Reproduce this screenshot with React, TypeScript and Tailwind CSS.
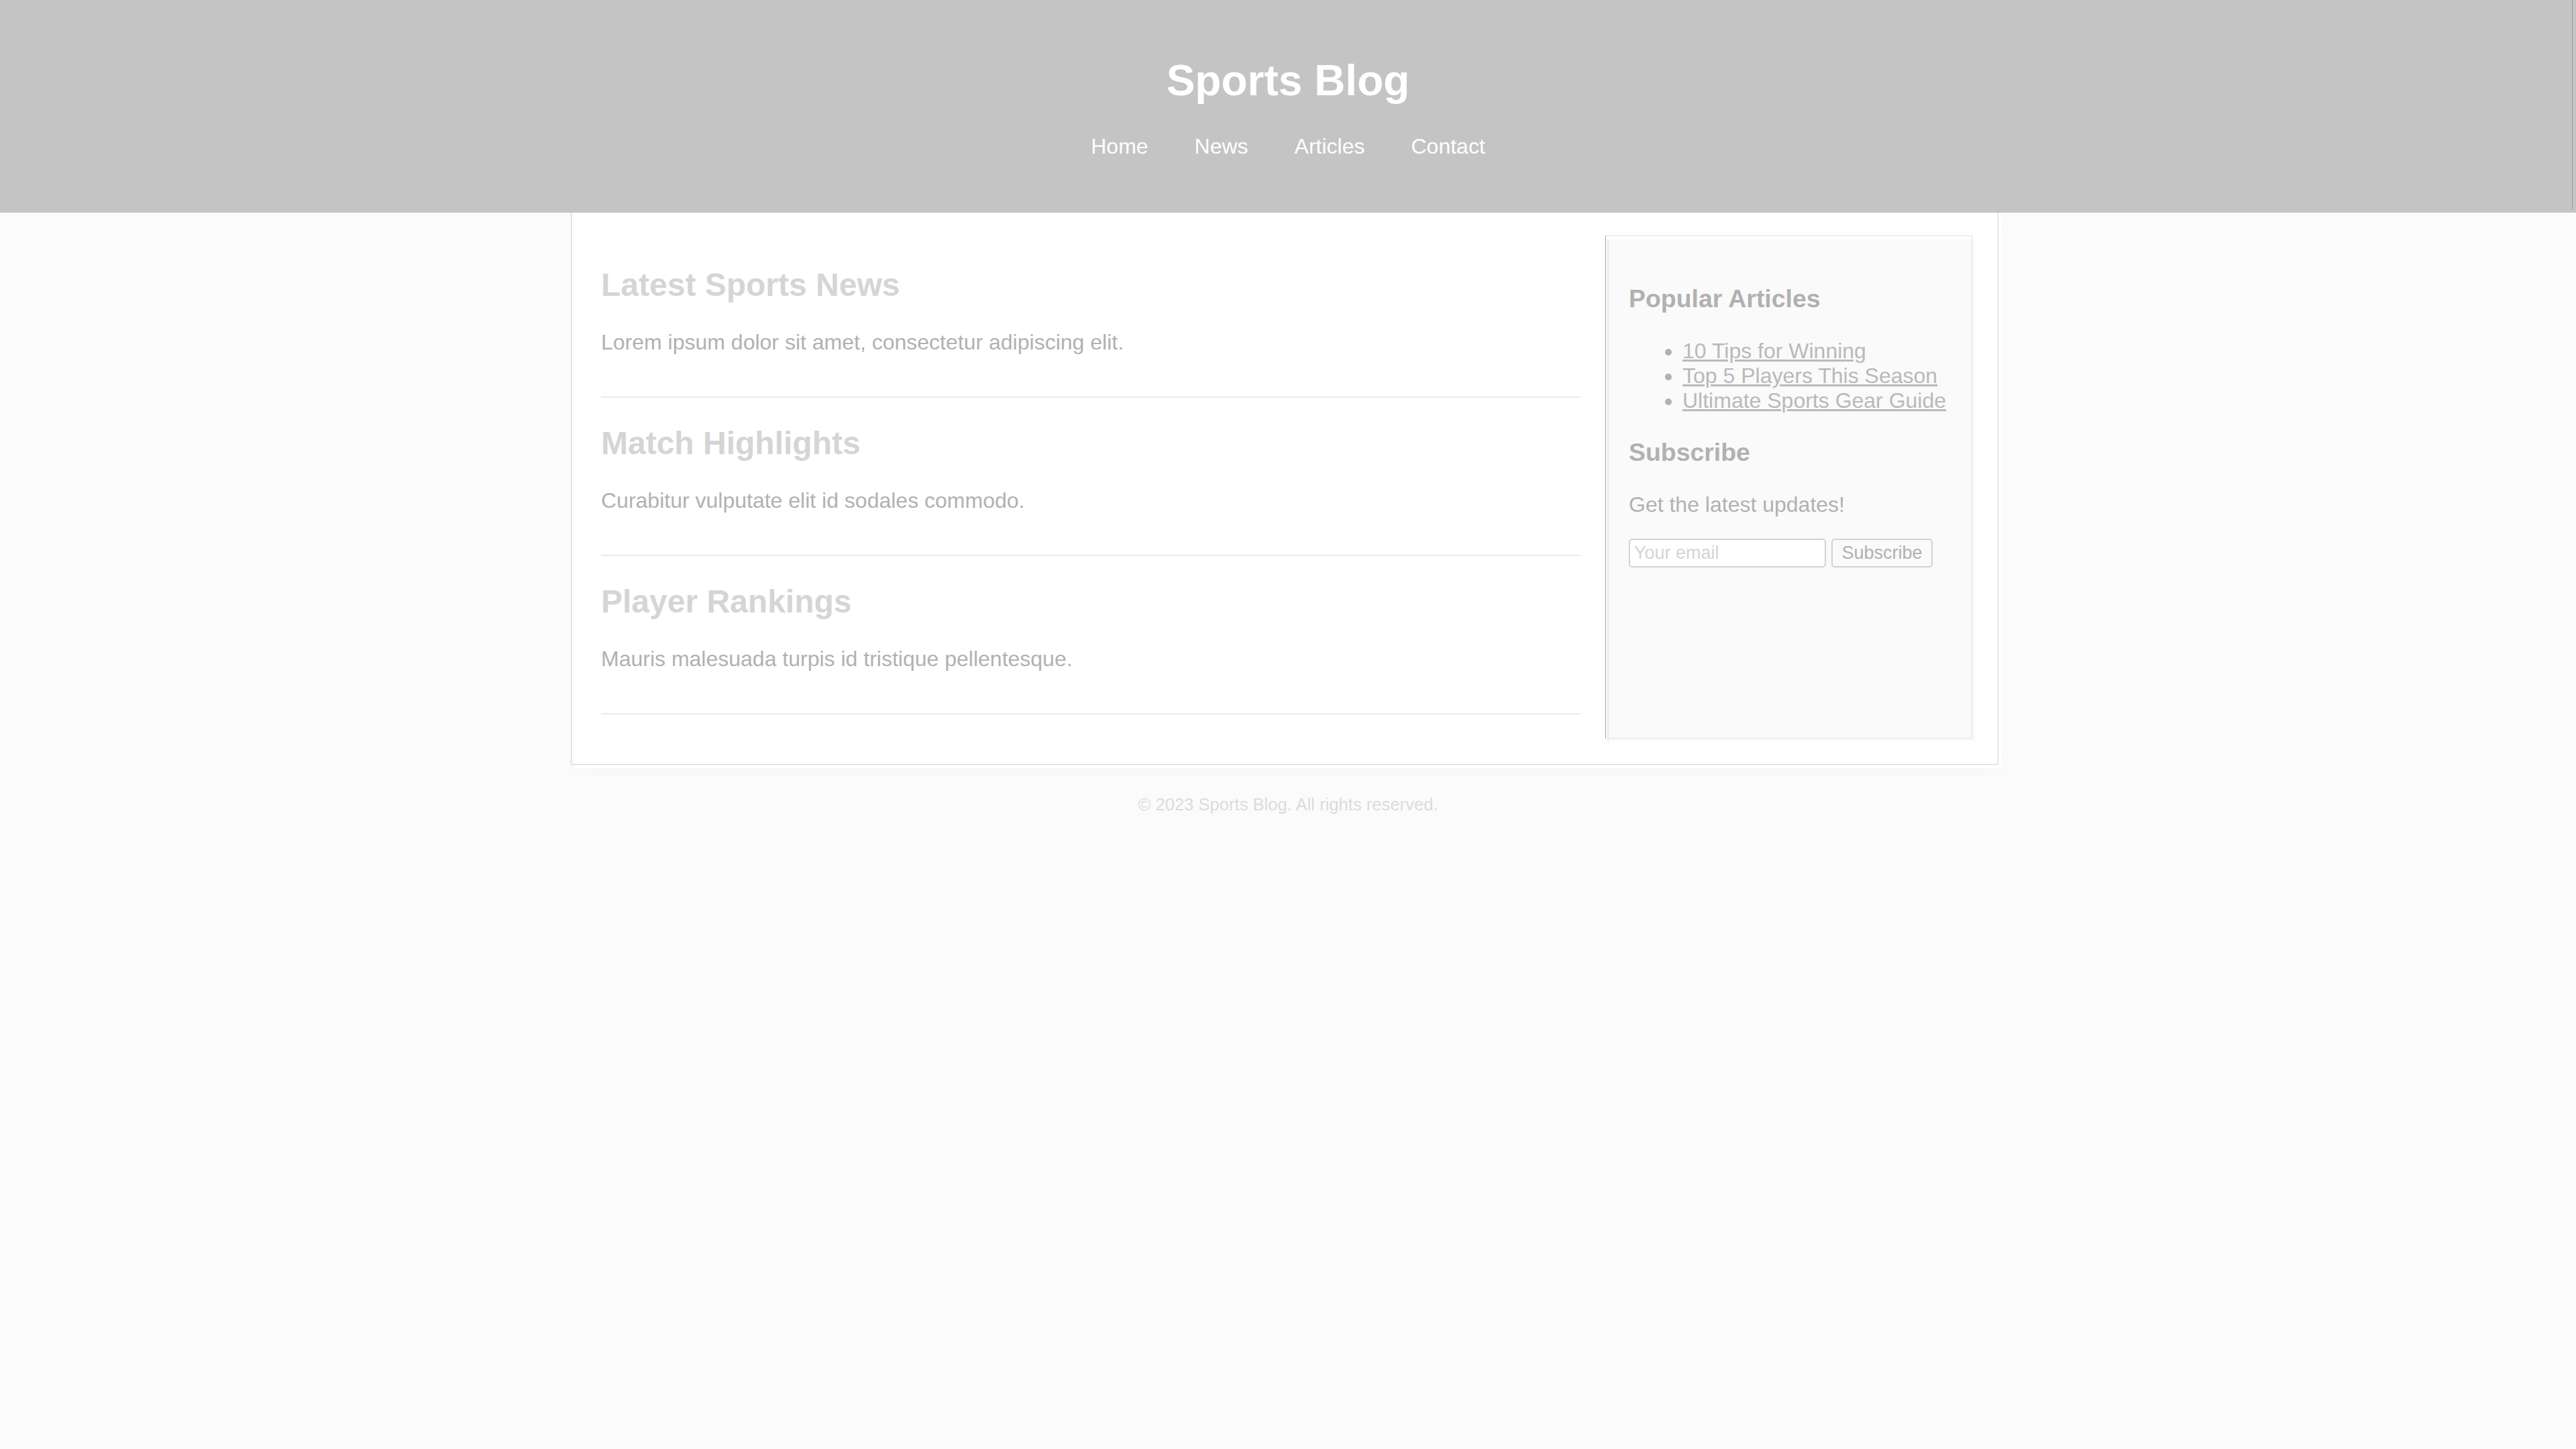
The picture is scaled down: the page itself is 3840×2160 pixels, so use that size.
const links = ["Home", "News", "Articles", "Contact"];

const articles = [
  { title: "Latest Sports News", text: "Lorem ipsum dolor sit amet, consectetur adipiscing elit." },
  { title: "Match Highlights", text: "Curabitur vulputate elit id sodales commodo." },
  { title: "Player Rankings", text: "Mauris malesuada turpis id tristique pellentesque." },
];

const popular = ["10 Tips for Winning", "Top 5 Players This Season", "Ultimate Sports Gear Guide"];

export default function App() {
  return (
    <div className="min-h-screen bg-[#fbfbfb] font-['Liberation_Sans',Arial,sans-serif] text-[32px] leading-[37px] text-[#b1b1b1]">
      <header className="relative z-10 bg-[#c4c4c4] px-10 pt-[83px] pb-20 text-center text-white">
        <h1 className="mb-[43px] text-[64px] leading-[74px] font-bold">Sports Blog</h1>
        <nav className="flex justify-center gap-[69px]">
          {links.map((label) => (
            <a key={label} href="#">
              {label}
            </a>
          ))}
        </nav>
        <div className="absolute top-0 right-[5px] bottom-[5px] w-px bg-[#999999]" />
      </header>

      <div className="relative mx-auto flex w-full max-w-[2128px] gap-10 bg-white p-10 shadow-[0_4px_20px_rgba(0,0,0,0.025)]">
        <div className="pointer-events-none absolute -top-1 right-[5px] bottom-[5px] -left-[5px] border border-t-0 border-[#d3d3d3]" />
        <main className="min-w-0 grow">
          {articles.map((a) => (
            <article key={a.title} className="mb-10 border-b-2 border-[#ebebeb] pb-[62px] first:pt-10">
              <h2 className="mb-10 text-[48px] leading-[55px] font-bold text-[#d5d5d5]">{a.title}</h2>
              <p>{a.text}</p>
            </article>
          ))}
        </main>

        <aside className="relative w-[548px] shrink-0 border-l-2 border-[#ebebeb] bg-[#fafafa] px-[30px] pt-[67px]">
          <div className="pointer-events-none absolute -top-[6px] right-1 bottom-1 -left-[5px] border border-[#e3e3e3] border-l-[#a3a3a3]" />
          <h3 className="mb-[38px] text-[1.17em] leading-[43px] font-bold">Popular Articles</h3>
          <ul className="mb-[37px] list-disc pl-20">
            {popular.map((label) => (
              <li key={label}>
                <a href="#" className="text-[#b9b9b9] underline">
                  {label}
                </a>
              </li>
            ))}
          </ul>
          <h3 className="mb-[38px] text-[1.17em] leading-[43px] font-bold">Subscribe</h3>
          <p className="mb-8">Get the latest updates!</p>
          <form className="flex gap-2 text-[27px] leading-[31px]" onSubmit={(e) => e.preventDefault()}>
            <input
              type="email"
              aria-label="Your email"
              placeholder="Your email"
              className="h-[43px] w-[294px] rounded-[5px] border-2 border-[#d3d3d3] bg-white px-[6px] placeholder:text-[#d5d5d5]"
            />
            <button type="submit" className="h-[43px] w-[151px] rounded-[5px] border-2 border-[#d3d3d3]">
              Subscribe
            </button>
          </form>
        </aside>
      </div>

      <footer className="py-10 text-center text-[0.8em] leading-[29px] text-[#dbdbdb]">
        © 2023 Sports Blog. All rights reserved.
      </footer>
    </div>
  );
}
